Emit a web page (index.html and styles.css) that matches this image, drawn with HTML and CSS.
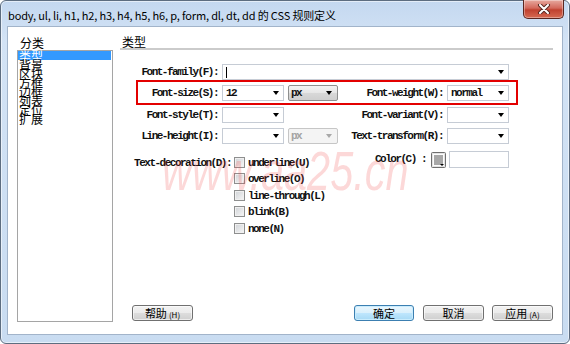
FILE: index.html
```html
<html>
  <head>
    <title>CSS 规则定义</title>
    <link rel="stylesheet" href="styles.css">
  </head>
  <body>
    <div class="window">
      <div class="titlebar">
        <span class="title">body, ul, li, h1, h2, h3, h4, h5, h6, p, form, dl, dt, dd 的 CSS 规则定义</span>
        <div class="close">
          <svg width="14" height="10" viewBox="0 0 14 10">
            <path d="M3 1 L11 9 M11 1 L3 9" stroke="#5a2a24" stroke-width="4" stroke-linecap="round"/>
            <path d="M3 1 L11 9 M11 1 L3 9" stroke="#fff" stroke-width="2" stroke-linecap="round"/>
          </svg>
        </div>
      </div>

      <div class="panel">
        <div class="side">
          <div class="caption">分类</div>
          <ul class="cats">
            <li class="sel">类型</li>
            <li>背景</li>
            <li>区块</li>
            <li>方框</li>
            <li>边框</li>
            <li>列表</li>
            <li>定位</li>
            <li>扩展</li>
          </ul>
        </div>

        <div class="main">
          <div class="heading">类型</div>

          <div class="form">
            <div class="lbl">Font-family(F):</div>
            <div class="field combo wide"><span class="val"><span class="caret"></span></span><i class="arrow"></i></div>

            <div class="lbl">Font-size(S):</div>
            <div class="field combo"><span class="val">12</span><i class="arrow"></i></div>
            <div class="field unit"><span class="val">px</span><i class="arrow"></i></div>
            <div class="lbl">Font-weight(W):</div>
            <div class="field combo"><span class="val">normal</span><i class="arrow"></i></div>

            <div class="lbl">Font-style(T):</div>
            <div class="field combo"><span class="val"></span><i class="arrow"></i></div>
            <div></div>
            <div class="lbl">Font-variant(V):</div>
            <div class="field combo"><span class="val"></span><i class="arrow"></i></div>

            <div class="lbl">Line-height(I):</div>
            <div class="field combo"><span class="val"></span><i class="arrow"></i></div>
            <div class="field unit off"><span class="val">px</span><i class="arrow"></i></div>
            <div class="lbl">Text-transform(R):</div>
            <div class="field combo"><span class="val"></span><i class="arrow"></i></div>
          </div>

          <div class="deco">
            <div class="deco-lbl">Text-decoration(D):</div>
            <div class="checks">
              <div class="check"><span class="box"></span>underline(U)</div>
              <div class="check"><span class="box"></span>overline(O)</div>
              <div class="check"><span class="box"></span>line-through(L)</div>
              <div class="check"><span class="box"></span>blink(B)</div>
              <div class="check"><span class="box"></span>none(N)</div>
            </div>
            <div class="color">
              <span class="color-lbl">Color(C) :</span>
              <svg class="swatch" width="15" height="16" viewBox="0 0 15 16">
                <rect x="0.5" y="0.5" width="14" height="15" rx="1" fill="#e4e4e4" stroke="#6f6f6f"/>
                <rect x="2.5" y="2.5" width="10" height="11" fill="#a8a8a8" stroke="#fdfdfd"/>
                <path d="M9 12 L13 12 L11 14 Z" fill="#000"/>
              </svg>
              <span class="field color-val"></span>
            </div>
          </div>

          <div class="buttons">
            <div class="btn help">帮助<span class="key">(H)</span></div>
            <div class="btn ok">确定</div>
            <div class="btn">取消</div>
            <div class="btn">应用<span class="key">(A)</span></div>
          </div>

          <div class="outline"></div>
          <div class="mark">www.aa25.cn</div>
        </div>
      </div>
    </div>
  </body>
</html>
```

FILE: styles.css
```css
* { box-sizing: border-box; }
body { margin: 0; background: #fff; }

.window {
  width: 570px; height: 344px;
  border: 1px solid #5d6d80; border-radius: 6px;
  background: linear-gradient(to bottom, #c4d8f0, #d3e3f5 40px, #c9dcf1);
  box-shadow: inset 0 0 0 1px rgba(255,255,255,0.55);
  padding: 0 6px 8px 6px;
  display: flex; flex-direction: column;
  font-family: "Noto Sans CJK SC", sans-serif;
}

.titlebar {
  height: 25px; display: flex; align-items: flex-start;
  margin: 0 -6px; padding-left: 7px;
}
.title { font-size: 11px; letter-spacing: -0.15px; line-height: 28px; color: #000; white-space: nowrap; }
.close {
  margin-left: auto; margin-right: 5px; margin-top: -1px;
  width: 41px; height: 19px;
  border: 1px solid #5b2620; border-top: none;
  border-radius: 0 0 5px 5px;
  background: linear-gradient(to bottom, #e7a99f, #d3685b 45%, #c0412f 55%, #d66a52);
  box-shadow: inset 0 0 0 1px rgba(255,255,255,0.35);
  display: flex; align-items: center; justify-content: center;
}

.panel {
  flex: 1; display: flex;
  background: #fff; border: 1px solid #a2b4ca;
  padding: 8px 9px 12px 9px;
}

.side { width: 96px; display: flex; flex-direction: column; }
.caption { font-size: 12px; line-height: 15px; height: 15px; padding-left: 3px; }
.cats {
  list-style: none; margin: 0; padding: 0;
  height: 272px; border: 1px solid #a5a5a5;
  font-size: 12px;
}
.cats li { height: 9px; line-height: 9px; padding-left: 1px; white-space: nowrap; }
.cats li.sel { background: #3399ff; color: #fff; margin-right: 1px; height: 9px; }

.main { flex: 1; margin-left: 7px; display: flex; flex-direction: column; position: relative; }
.heading {
  font-size: 12px; line-height: 13px; height: 15px; padding-left: 2px;
  border-bottom: 2px solid #cbcbcb;
}

.form {
  margin-top: 14px;
  display: grid;
  grid-template-columns: 98px 62px 50px 101px 62px;
  grid-template-rows: 21px 22px 21px 16px;
  column-gap: 4px;
  align-items: start;
}

.lbl, .deco-lbl, .check, .color-lbl, .field {
  font-family: "Liberation Mono", monospace;
  font-size: 11px; font-weight: bold; letter-spacing: -1.5px;
  color: #111;
}
.lbl { text-align: right; line-height: 16px; white-space: nowrap; }

.field {
  height: 16px; display: flex; align-items: center;
  border: 1px solid #c6ccd5; background: #fff;
  padding-left: 3px;
}
.field .val { flex: 1; line-height: 14px; white-space: nowrap; }
.wide { grid-column: 2 / 6; }
.caret { display: inline-block; width: 1px; height: 11px; background: #000; vertical-align: middle; }
.arrow {
  width: 0; height: 0; margin-right: 4px;
  border-left: 3px solid transparent; border-right: 3px solid transparent;
  border-top: 4px solid #000;
}
.unit {
  border-color: #8e8f8f; border-radius: 2px;
  background: linear-gradient(to bottom, #f3f3f3, #e6e6e6 50%, #d8d8d8 51%, #cfcfcf);
  padding-left: 2px;
}
.unit .arrow { margin-right: 5px; }
.unit.off { border-color: #c6c6c6; background: #f4f4f4; color: #a3a3a3; }
.unit.off .arrow { border-top-color: #a8a8a8; }

.deco { display: flex; margin-top: 7px; }
.deco-lbl { width: 111px; text-align: right; margin-top: 6px; line-height: 12px; white-space: nowrap; }
.checks { margin-left: 3px; margin-top: 6px; }
.check { height: 16px; display: flex; align-items: flex-start; line-height: 12px; white-space: nowrap; }
.check:nth-child(even) { height: 17px; }
.box {
  width: 11px; height: 11px; margin-right: 3px;
  border: 1px solid #8e8f8f;
  background: linear-gradient(135deg, #cfd2d6, #f7f7f7);
  box-shadow: inset 0 0 0 1px #f0f0f0;
}

.color { margin-left: auto; margin-right: 44px; display: flex; align-items: center; height: 17px; }
.color-lbl { margin-right: 5px; line-height: 12px; margin-top: -2px; }
.swatch { margin-right: 3px; }
.color-val { width: 60px; height: 17px; }

.buttons { margin-top: auto; margin-bottom: 1px; display: flex; }
.btn {
  width: 61px; height: 16px;
  border: 1px solid #707070; border-radius: 3px;
  background: linear-gradient(to bottom, #f2f2f2, #ebebeb 50%, #dddddd 51%, #cfcfcf);
  box-shadow: inset 0 0 0 1px rgba(255,255,255,0.6);
  font-size: 11px; line-height: 14px; text-align: center; color: #000;
  margin-left: 8px;
}
.btn .key { font-size: 8px; margin-left: 2px; }
.help { margin-left: 12px; }
.ok {
  margin-left: auto; width: 60px;
  border-color: #3c7fb1;
  background: linear-gradient(to bottom, #eaf6fd, #d9f0fc 50%, #bee6fd 51%, #a7d9f5);
  box-shadow: inset 0 0 0 1px #c9ecfd;
}
.ok + .btn { margin-left: 9px; }

.outline {
  position: absolute; left: 16px; top: 45px;
  width: 382px; height: 25px;
  border: 2px solid #e30000;
}
.mark {
  position: absolute; left: 42px; top: 108px;
  font-family: "Liberation Sans", sans-serif; font-style: italic;
  font-size: 56px; line-height: 56px;
  color: rgba(240, 60, 60, 0.2);
  transform: scaleX(0.74); transform-origin: left top;
  white-space: nowrap; pointer-events: none;
}
```
